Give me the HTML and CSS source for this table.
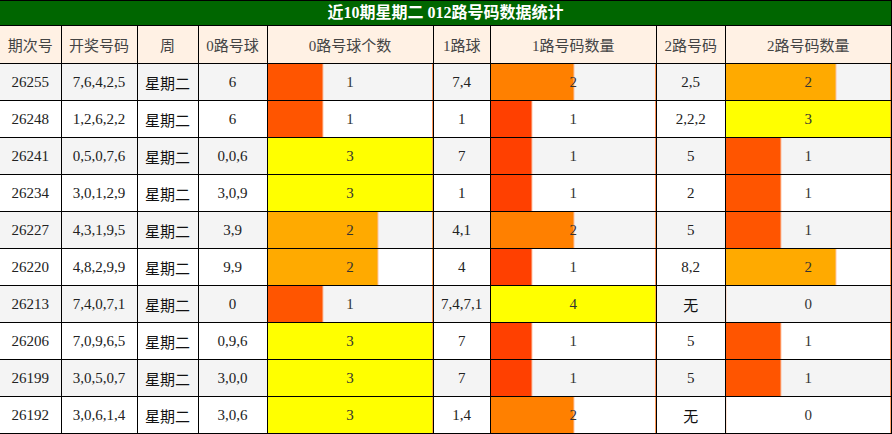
FILE: index.html
```html
<!DOCTYPE html>
<html lang="zh">
<head>
<meta charset="utf-8">
<title>近10期星期二 012路号码数据统计</title>
<link rel="stylesheet" href="styles.css">
</head>
<body>
<table class="stats">
  <colgroup>
    <col class="c-issue"><col class="c-draw"><col class="c-week"><col class="c-r0">
    <col class="c-bar"><col class="c-r1"><col class="c-bar"><col class="c-r2"><col class="c-bar">
  </colgroup>
  <thead>
    <tr class="title-row"><th colspan="9">近10期星期二 012路号码数据统计</th></tr>
    <tr class="head-row">
      <th>期次号</th><th>开奖号码</th><th>周</th><th>0路号球</th><th>0路号球个数</th>
      <th>1路球</th><th>1路号码数量</th><th>2路号码</th><th>2路号码数量</th>
    </tr>
  </thead>
  <tbody>
    <tr class="odd">
      <td>26255</td><td>7,6,4,2,5</td><td class="wk">星期二</td><td>6</td>
      <td class="bar" style="--w:33.33%;--c:#ff5500">1</td><td>7,4</td>
      <td class="bar" style="--w:50%;--c:#ff8000">2</td><td>2,5</td>
      <td class="bar" style="--w:66.67%;--c:#ffaa00">2</td>
    </tr>
    <tr>
      <td>26248</td><td>1,2,6,2,2</td><td class="wk">星期二</td><td>6</td>
      <td class="bar" style="--w:33.33%;--c:#ff5500">1</td><td>1</td>
      <td class="bar" style="--w:25%;--c:#ff4000">1</td><td>2,2,2</td>
      <td class="bar" style="--w:100%;--c:#ffff00">3</td>
    </tr>
    <tr class="odd">
      <td>26241</td><td>0,5,0,7,6</td><td class="wk">星期二</td><td>0,0,6</td>
      <td class="bar" style="--w:100%;--c:#ffff00">3</td><td>7</td>
      <td class="bar" style="--w:25%;--c:#ff4000">1</td><td>5</td>
      <td class="bar" style="--w:33.33%;--c:#ff5500">1</td>
    </tr>
    <tr>
      <td>26234</td><td>3,0,1,2,9</td><td class="wk">星期二</td><td>3,0,9</td>
      <td class="bar" style="--w:100%;--c:#ffff00">3</td><td>1</td>
      <td class="bar" style="--w:25%;--c:#ff4000">1</td><td>2</td>
      <td class="bar" style="--w:33.33%;--c:#ff5500">1</td>
    </tr>
    <tr class="odd">
      <td>26227</td><td>4,3,1,9,5</td><td class="wk">星期二</td><td>3,9</td>
      <td class="bar" style="--w:66.67%;--c:#ffaa00">2</td><td>4,1</td>
      <td class="bar" style="--w:50%;--c:#ff8000">2</td><td>5</td>
      <td class="bar" style="--w:33.33%;--c:#ff5500">1</td>
    </tr>
    <tr>
      <td>26220</td><td>4,8,2,9,9</td><td class="wk">星期二</td><td>9,9</td>
      <td class="bar" style="--w:66.67%;--c:#ffaa00">2</td><td>4</td>
      <td class="bar" style="--w:25%;--c:#ff4000">1</td><td>8,2</td>
      <td class="bar" style="--w:66.67%;--c:#ffaa00">2</td>
    </tr>
    <tr class="odd">
      <td>26213</td><td>7,4,0,7,1</td><td class="wk">星期二</td><td>0</td>
      <td class="bar" style="--w:33.33%;--c:#ff5500">1</td><td>7,4,7,1</td>
      <td class="bar" style="--w:100%;--c:#ffff00">4</td><td class="wk">无</td>
      <td class="bar" style="--w:0%;--c:#ffffff">0</td>
    </tr>
    <tr>
      <td>26206</td><td>7,0,9,6,5</td><td class="wk">星期二</td><td>0,9,6</td>
      <td class="bar" style="--w:100%;--c:#ffff00">3</td><td>7</td>
      <td class="bar" style="--w:25%;--c:#ff4000">1</td><td>5</td>
      <td class="bar" style="--w:33.33%;--c:#ff5500">1</td>
    </tr>
    <tr class="odd">
      <td>26199</td><td>3,0,5,0,7</td><td class="wk">星期二</td><td>3,0,0</td>
      <td class="bar" style="--w:100%;--c:#ffff00">3</td><td>7</td>
      <td class="bar" style="--w:25%;--c:#ff4000">1</td><td>5</td>
      <td class="bar" style="--w:33.33%;--c:#ff5500">1</td>
    </tr>
    <tr>
      <td>26192</td><td>3,0,6,1,4</td><td class="wk">星期二</td><td>3,0,6</td>
      <td class="bar" style="--w:100%;--c:#ffff00">3</td><td>1,4</td>
      <td class="bar" style="--w:50%;--c:#ff8000">2</td><td class="wk">无</td>
      <td class="bar" style="--w:0%;--c:#ffffff">0</td>
    </tr>
  </tbody>
</table>
</body>
</html>
```

FILE: styles.css
```css
html, body {
  margin: 0;
  padding: 0;
  background: #ffffff;
}

.stats {
  border-collapse: collapse;
  table-layout: fixed;
  width: 892px;
  font-family: "Liberation Serif", "Noto Sans CJK SC", serif;
  font-size: 15px;
  color: #222222;
}

.c-issue { width: 61px; }
.c-draw { width: 76px; }
.c-week { width: 61px; }
.c-r0 { width: 69px; }
.c-bar { width: 166px; }
.c-r1 { width: 57px; }
.c-r2 { width: 69px; }

.stats th,
.stats td {
  border: 1px solid #000000;
  padding: 0;
  text-align: center;
  vertical-align: middle;
  white-space: nowrap;
}

.stats tr > :first-child {
  border-left: none;
}

.title-row {
  height: 25px;
}

.title-row th {
  background: #006600;
  color: #ffffff;
  font-weight: bold;
  font-size: 16px;
  line-height: 20px;
}

.head-row {
  height: 38px;
}

.head-row th {
  background: #fff1e4;
  color: #444444;
  font-weight: normal;
  font-size: 15px;
}

tbody tr {
  height: 37px;
  background: #ffffff;
}

tbody tr.odd {
  background: #f4f4f4;
}

.wk {
  font-family: "Noto Sans CJK SC", sans-serif;
  font-size: 15px;
  color: #111111;
}

.bar {
  color: #333333;
  background-image: linear-gradient(90deg,
    var(--c) var(--w),
    rgba(255, 160, 110, 0.6) var(--w),
    rgba(255, 160, 110, 0.6) calc(var(--w) + 1px),
    transparent calc(var(--w) + 1px));
  box-shadow: inset -1px 0 0 rgba(255, 140, 70, 0.7);
}
```
